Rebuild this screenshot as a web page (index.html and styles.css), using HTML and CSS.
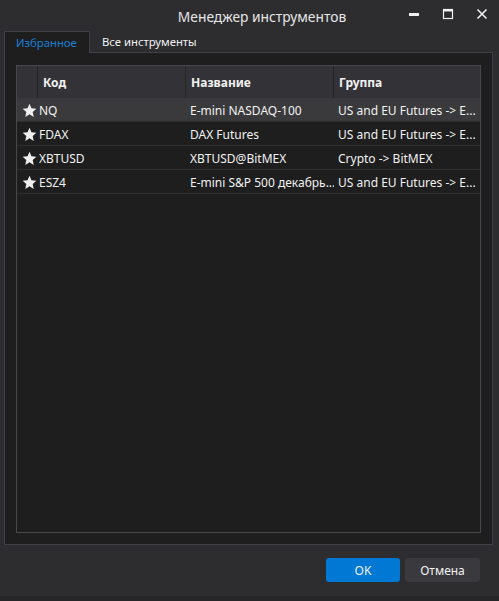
FILE: index.html
```html
<!DOCTYPE html>
<html lang="ru">
<head>
<meta charset="utf-8">
<title>Менеджер инструментов</title>
<link rel="stylesheet" href="styles.css">
</head>
<body>
<div class="window">
  <div class="titlebar">
    <div class="title">Менеджер инструментов</div>
    <div class="controls">
      <span class="ctl"><svg width="12" height="12" viewBox="0 0 12 12"><rect x="1" y="5" width="10" height="3" fill="#f0f0f0"/></svg></span>
      <span class="ctl"><svg width="12" height="12" viewBox="0 0 12 12"><rect x="1.5" y="1.5" width="9" height="9" fill="none" stroke="#f0f0f0" stroke-width="1.2"/><rect x="1" y="1" width="10" height="2.5" fill="#f0f0f0"/></svg></span>
      <span class="ctl"><svg width="12" height="12" viewBox="0 0 12 12"><path d="M1.5 1.5L10.5 10.5M10.5 1.5L1.5 10.5" stroke="#f0f0f0" stroke-width="1.6"/></svg></span>
    </div>
  </div>
  <div class="tabs">
    <div class="tab active">Избранное</div>
    <div class="tab">Все инструменты</div>
    <div class="tab-fill"></div>
  </div>
  <div class="panel">
    <div class="grid">
      <div class="row head">
        <div class="cell star"></div>
        <div class="cell">Код</div>
        <div class="cell">Название</div>
        <div class="cell last">Группа</div>
      </div>
      <div class="row sel">
        <div class="cell star"><svg class="st" viewBox="0 0 16 16"><path d="M8 0.8L10.1 5.6L15.3 6.1L11.4 9.6L12.5 14.8L8 12.1L3.5 14.8L4.6 9.6L0.7 6.1L5.9 5.6Z" fill="#f0f0f0"/></svg></div>
        <div class="cell code">NQ</div>
        <div class="cell">E-mini NASDAQ-100</div>
        <div class="cell last">US and EU Futures -&gt; E...</div>
      </div>
      <div class="row">
        <div class="cell star"><svg class="st" viewBox="0 0 16 16"><path d="M8 0.8L10.1 5.6L15.3 6.1L11.4 9.6L12.5 14.8L8 12.1L3.5 14.8L4.6 9.6L0.7 6.1L5.9 5.6Z" fill="#f0f0f0"/></svg></div>
        <div class="cell code">FDAX</div>
        <div class="cell">DAX Futures</div>
        <div class="cell last">US and EU Futures -&gt; E...</div>
      </div>
      <div class="row">
        <div class="cell star"><svg class="st" viewBox="0 0 16 16"><path d="M8 0.8L10.1 5.6L15.3 6.1L11.4 9.6L12.5 14.8L8 12.1L3.5 14.8L4.6 9.6L0.7 6.1L5.9 5.6Z" fill="#f0f0f0"/></svg></div>
        <div class="cell code">XBTUSD</div>
        <div class="cell">XBTUSD@BitMEX</div>
        <div class="cell last">Crypto -&gt; BitMEX</div>
      </div>
      <div class="row">
        <div class="cell star"><svg class="st" viewBox="0 0 16 16"><path d="M8 0.8L10.1 5.6L15.3 6.1L11.4 9.6L12.5 14.8L8 12.1L3.5 14.8L4.6 9.6L0.7 6.1L5.9 5.6Z" fill="#f0f0f0"/></svg></div>
        <div class="cell code">ESZ4</div>
        <div class="cell">E-mini S&amp;P 500 декабрь...</div>
        <div class="cell last">US and EU Futures -&gt; E...</div>
      </div>
    </div>
  </div>
  <div class="footer">
    <button class="btn ok">OK</button>
    <button class="btn cancel">Отмена</button>
  </div>
</div>
<div class="below"></div>
</body>
</html>
```

FILE: styles.css
```css
* { box-sizing: border-box; }
html, body {
  margin: 0;
  padding: 0;
  width: 499px;
  height: 601px;
  overflow: hidden;
  background: #2d2d30;
  font-family: "Segoe UI", "Noto Sans", "Open Sans", sans-serif;
  font-size: 12px;
  color: #f1f1f1;
}
.window {
  height: 596px;
  background: #2d2d30;
  display: flex;
  flex-direction: column;
}
.titlebar {
  height: 31px;
  display: flex;
  align-items: center;
  position: relative;
}
.title {
  flex: 1;
  text-align: center;
  font-size: 13.8px;
  color: #e6e6e6;
  padding-left: 25px;
  padding-top: 1px;
}
.controls {
  position: absolute;
  right: 0;
  top: 0;
  height: 28px;
  display: flex;
  align-items: center;
}
.ctl {
  width: 34px;
  height: 24px;
  display: flex;
  align-items: center;
  justify-content: center;
}
.ctl svg { display: block; }
.tabs {
  display: flex;
  height: 22px;
  padding-left: 4px;
  padding-right: 6px;
  font-size: 11.3px;
}
.tab {
  height: 22px;
  line-height: 22px;
  padding: 0 12px 0 12px;
  color: #f1f1f1;
  border-bottom: 1px solid #3f3f46;
}
.tab.active {
  width: 86px;
  background: #1e1e1e;
  color: #1a7fd4;
  border: 1px solid #3f3f46;
  border-bottom: none;
  padding-left: 11px;
}
.tab-fill {
  flex: 1;
  border-bottom: 1px solid #3f3f46;
}
.panel {
  margin: 0 6px 0 4px;
  height: 492px;
  background: #1e1e1e;
  border: 1px solid #3f3f46;
  border-top: none;
  padding: 12px 11px 11px 11px;
}
.grid {
  height: 100%;
  border: 1px solid #48484c;
  background: #1e1e1e;
}
.row {
  display: grid;
  grid-template-columns: 21px 148px 148px 1fr;
  height: 24px;
  border-bottom: 1px solid #2e2e30;
  align-items: stretch;
}
.row.head {
  height: 32px;
  background: #333337;
  border-bottom: none;
  font-weight: bold;
}
.row.head .cell {
  border-right: 1px solid #262628;
  padding-left: 5px;
  padding-top: 1px;
}
.row.head .cell.last { border-right: none; }
.row.sel { background: #3a3a3c; }
.cell {
  display: flex;
  align-items: center;
  padding-left: 4px;
  padding-top: 2px;
  white-space: nowrap;
  overflow: hidden;
}
.cell.code { padding-left: 1px; }
.cell.star {
  padding-left: 5px;
  padding-top: 1px;
}
.st {
  width: 15px;
  height: 15px;
  display: block;
}
.footer {
  flex: 1;
  display: flex;
  justify-content: flex-end;
  align-items: flex-start;
  padding: 13px 19px 0 0;
  gap: 5px;
}
.btn {
  height: 24px;
  border: none;
  border-radius: 3px;
  font-family: inherit;
  font-size: 12px;
  color: #f1f1f1;
  padding: 0;
}
.btn.ok {
  width: 74px;
  background: #0078d4;
}
.btn.cancel {
  width: 75px;
  background: #3a3a3e;
}
.below {
  height: 5px;
  background: #262628;
}
```
